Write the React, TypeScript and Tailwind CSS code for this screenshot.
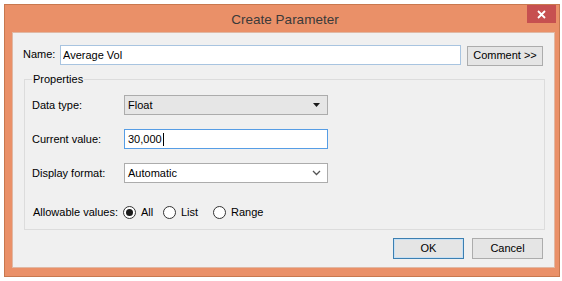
import { useState } from "react";

const font = { fontFamily: '"Liberation Sans", Arial, sans-serif' };

function Radio({ label, checked, onClick, width }: { label: string; checked: boolean; onClick: () => void; width: string }) {
  return (
    <button onClick={onClick} className={`flex items-center gap-[5px] ${width}`}>
      <span className="w-[13px] h-[13px] rounded-full border border-[#333] bg-white flex items-center justify-center">
        {checked && <span className="w-[7px] h-[7px] rounded-full bg-[#1a1a1a]" />}
      </span>
      <span>{label}</span>
    </button>
  );
}

export default function App() {
  const [allow, setAllow] = useState("All");

  return (
    <div className="w-[562px] h-[281px] bg-white pt-[4px] pl-[4px] text-[11px] text-black" style={font}>
      <div className="w-[556px] h-[273px] bg-[#ea9068] border border-[#c8784f] flex flex-col">
        {/* Title bar */}
        <div className="h-[27px] flex items-start relative">
          <div className="flex-1 text-center pt-[5px] pl-[6px] text-[13.5px] text-[#3a3a3a]">Create Parameter</div>
          <button className="absolute right-[3px] top-0 w-[29px] h-[18px] bg-[#c75050] flex items-center justify-center">
            <svg width="9" height="9" viewBox="0 0 9 9">
              <path d="M1 1 L8 8 M8 1 L1 8" stroke="white" strokeWidth="1.8" />
            </svg>
          </button>
        </div>

        {/* Client area */}
        <div className="ml-[7px] mr-[4px] h-[236px] bg-[#f0f0f0] border border-[#e0b8a4] flex flex-col px-[10px]">
          <div className="flex items-center mt-[11px] h-[21px]">
            <span className="w-[37px]">Name:</span>
            <input
              defaultValue="Average Vol"
              className="w-[401px] h-[20px] bg-white border border-[#a8c4e0] px-[2px] outline-none"
            />
            <button className="ml-[6px] mt-[2px] w-[76px] h-[20px] bg-[#e5e5e5] border border-[#acacac]">Comment &gt;&gt;</button>
          </div>

          <fieldset className="mt-[7px] ml-[1px] mr-[-1px] border border-[#dcdcdc] pl-[7px] pr-[8px] pb-[7px]">
            <legend className="px-[1px] leading-[14px]">Properties</legend>

            <div className="flex items-center mt-[9px]">
              <span className="w-[92px]">Data type:</span>
              <button className="w-[204px] h-[20px] bg-[#e6e6e6] border border-[#acacac] flex items-center justify-between px-[3px]">
                <span>Float</span>
                <svg width="7" height="4" viewBox="0 0 7 4" className="mr-[4px]">
                  <path d="M0 0 H7 L3.5 4 Z" fill="#1a1a1a" />
                </svg>
              </button>
            </div>

            <div className="flex items-center mt-[14px]">
              <span className="w-[92px]">Current value:</span>
              <div className="w-[204px] h-[20px] bg-white border border-[#569de5] flex items-center px-[3px]">
                <span>30,000</span>
                <span className="w-[1px] h-[13px] bg-black ml-[1px]" />
              </div>
            </div>

            <div className="flex items-center mt-[14px]">
              <span className="w-[92px]">Display format:</span>
              <button className="w-[204px] h-[20px] bg-white border border-[#acacac] flex items-center justify-between px-[3px]">
                <span>Automatic</span>
                <svg width="9" height="6" viewBox="0 0 9 6" className="mr-[3px]">
                  <path d="M1 1 L4.5 4.5 L8 1" stroke="#555" strokeWidth="1.3" fill="none" />
                </svg>
              </button>
            </div>

            <div className="flex items-center mt-[19px] h-[20px]">
              <span className="w-[91px] pl-[1px]">Allowable values:</span>
              <Radio label="All" checked={allow === "All"} onClick={() => setAllow("All")} width="w-[40px]" />
              <Radio label="List" checked={allow === "List"} onClick={() => setAllow("List")} width="w-[50px]" />
              <Radio label="Range" checked={allow === "Range"} onClick={() => setAllow("Range")} width="w-[60px]" />
            </div>
          </fieldset>

          <div className="flex justify-end gap-[8px] mt-[8px] mr-[1px]">
            <button className="w-[71px] h-[21px] bg-[#e5e5e5] border border-[#3c7fb1] shadow-[inset_0_0_0_1px_#c7e0f4]">OK</button>
            <button className="w-[71px] h-[21px] bg-[#e5e5e5] border border-[#acacac]">Cancel</button>
          </div>
        </div>
      </div>
    </div>
  );
}
